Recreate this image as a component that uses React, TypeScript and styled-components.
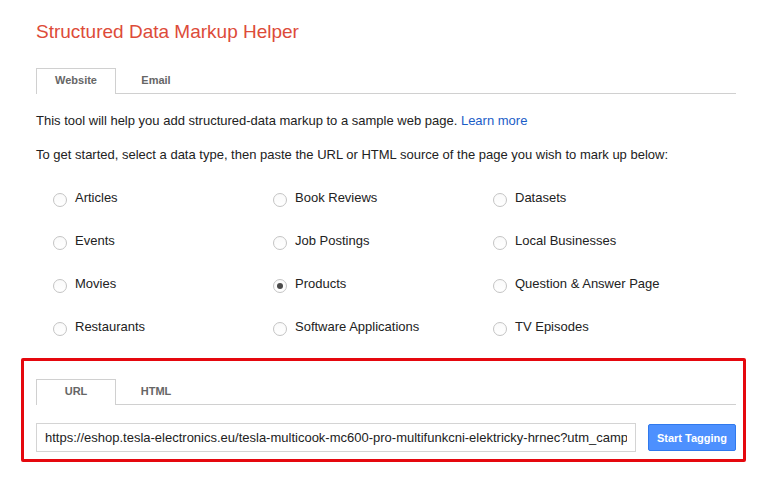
import React, { useState } from 'react';
import styled, { createGlobalStyle } from 'styled-components';

const GlobalStyle = createGlobalStyle`
  body {
    margin: 0;
    background: #fff;
    font-family: "Liberation Sans", Arial, sans-serif;
    color: #222;
  }
`;

const Page = styled.div`
  width: 700px;
  padding: 0 36px;
`;

const Title = styled.h1`
  margin: 20px 0 24px;
  font-size: 19px;
  line-height: 24px;
  font-weight: normal;
  color: #dd4b39;
`;

const TabBar = styled.div`
  display: flex;
  align-items: flex-start;
  height: 25px;
  border-bottom: 1px solid #d0d0d0;
`;

const Tab = styled.div<{ $active?: boolean }>`
  box-sizing: border-box;
  width: 80px;
  height: ${p => (p.$active ? '26px' : '25px')};
  display: flex;
  align-items: center;
  justify-content: center;
  padding-bottom: ${p => (p.$active ? '3px' : '2px')};
  font-size: 11px;
  font-weight: bold;
  color: #666;
  background: #fff;
  border: 1px solid ${p => (p.$active ? '#d0d0d0' : 'transparent')};
  border-bottom: none;
`;

const Text = styled.p<{ $top: number }>`
  margin: ${p => p.$top}px 0 0;
  font-size: 13px;
  line-height: 18px;
`;

const Link = styled.a`
  color: #1a5dc7;
  text-decoration: none;
`;

const TypeGrid = styled.div`
  display: grid;
  grid-template-columns: repeat(3, 220px);
  row-gap: 25px;
  margin: 24px 0 0 17px;
`;

const Option = styled.label`
  display: flex;
  align-items: center;
  gap: 8px;
  height: 18px;
  font-size: 13px;
  cursor: pointer;
`;

const Radio = styled.span<{ $checked?: boolean }>`
  box-sizing: border-box;
  width: 14px;
  height: 14px;
  margin-top: 5px;
  border-radius: 50%;
  border: 1px solid #c4c4c4;
  background: linear-gradient(#fafafa, #fff);
  display: flex;
  align-items: center;
  justify-content: center;

  &::after {
    content: '';
    width: 6px;
    height: 6px;
    border-radius: 50%;
    background: #4a4a4a;
    display: ${p => (p.$checked ? 'block' : 'none')};
  }
`;

const SourceBox = styled.section`
  margin: 23px -10px 0 -15px;
  padding: 18px 7px 7px 12px;
  border: 3px solid #e5080e;
  border-radius: 2px;
`;

const InputRow = styled.div`
  display: flex;
  align-items: center;
  gap: 12px;
  margin-top: 18px;
`;

const UrlInput = styled.input`
  box-sizing: border-box;
  width: 600px;
  height: 29px;
  padding: 0 8px;
  border: 1px solid #d4d4d4;
  font-family: "Liberation Sans", Arial, sans-serif;
  font-size: 13px;
  color: #222;
  outline: none;
`;

const StartButton = styled.button`
  box-sizing: border-box;
  width: 88px;
  height: 27px;
  border: 1px solid #3079ed;
  border-radius: 2px;
  background: #4d90fe;
  color: #fff;
  font-family: "Liberation Sans", Arial, sans-serif;
  font-size: 11px;
  font-weight: bold;
  cursor: pointer;
`;

const dataTypes = [
  'Articles', 'Book Reviews', 'Datasets',
  'Events', 'Job Postings', 'Local Businesses',
  'Movies', 'Products', 'Question & Answer Page',
  'Restaurants', 'Software Applications', 'TV Episodes',
];

const App = () => {
  const [selected, setSelected] = useState('Products');
  const [url, setUrl] = useState(
    'https://eshop.tesla-electronics.eu/tesla-multicook-mc600-pro-multifunkcni-elektricky-hrnec?utm_campaign=feed'
  );

  return (
    <Page>
      <GlobalStyle />
      <Title>Structured Data Markup Helper</Title>
      <TabBar>
        <Tab $active>Website</Tab>
        <Tab>Email</Tab>
      </TabBar>
      <Text $top={18}>
        This tool will help you add structured-data markup to a sample web page. <Link href="#">Learn more</Link>
      </Text>
      <Text $top={16}>
        To get started, select a data type, then paste the URL or HTML source of the page you wish to mark up below:
      </Text>
      <TypeGrid>
        {dataTypes.map(type => (
          <Option key={type} onClick={() => setSelected(type)}>
            <Radio $checked={selected === type} />
            {type}
          </Option>
        ))}
      </TypeGrid>
      <SourceBox>
        <TabBar>
          <Tab $active>URL</Tab>
          <Tab>HTML</Tab>
        </TabBar>
        <InputRow>
          <UrlInput value={url} onChange={e => setUrl(e.target.value)} />
          <StartButton>Start Tagging</StartButton>
        </InputRow>
      </SourceBox>
    </Page>
  );
};

export default App;
